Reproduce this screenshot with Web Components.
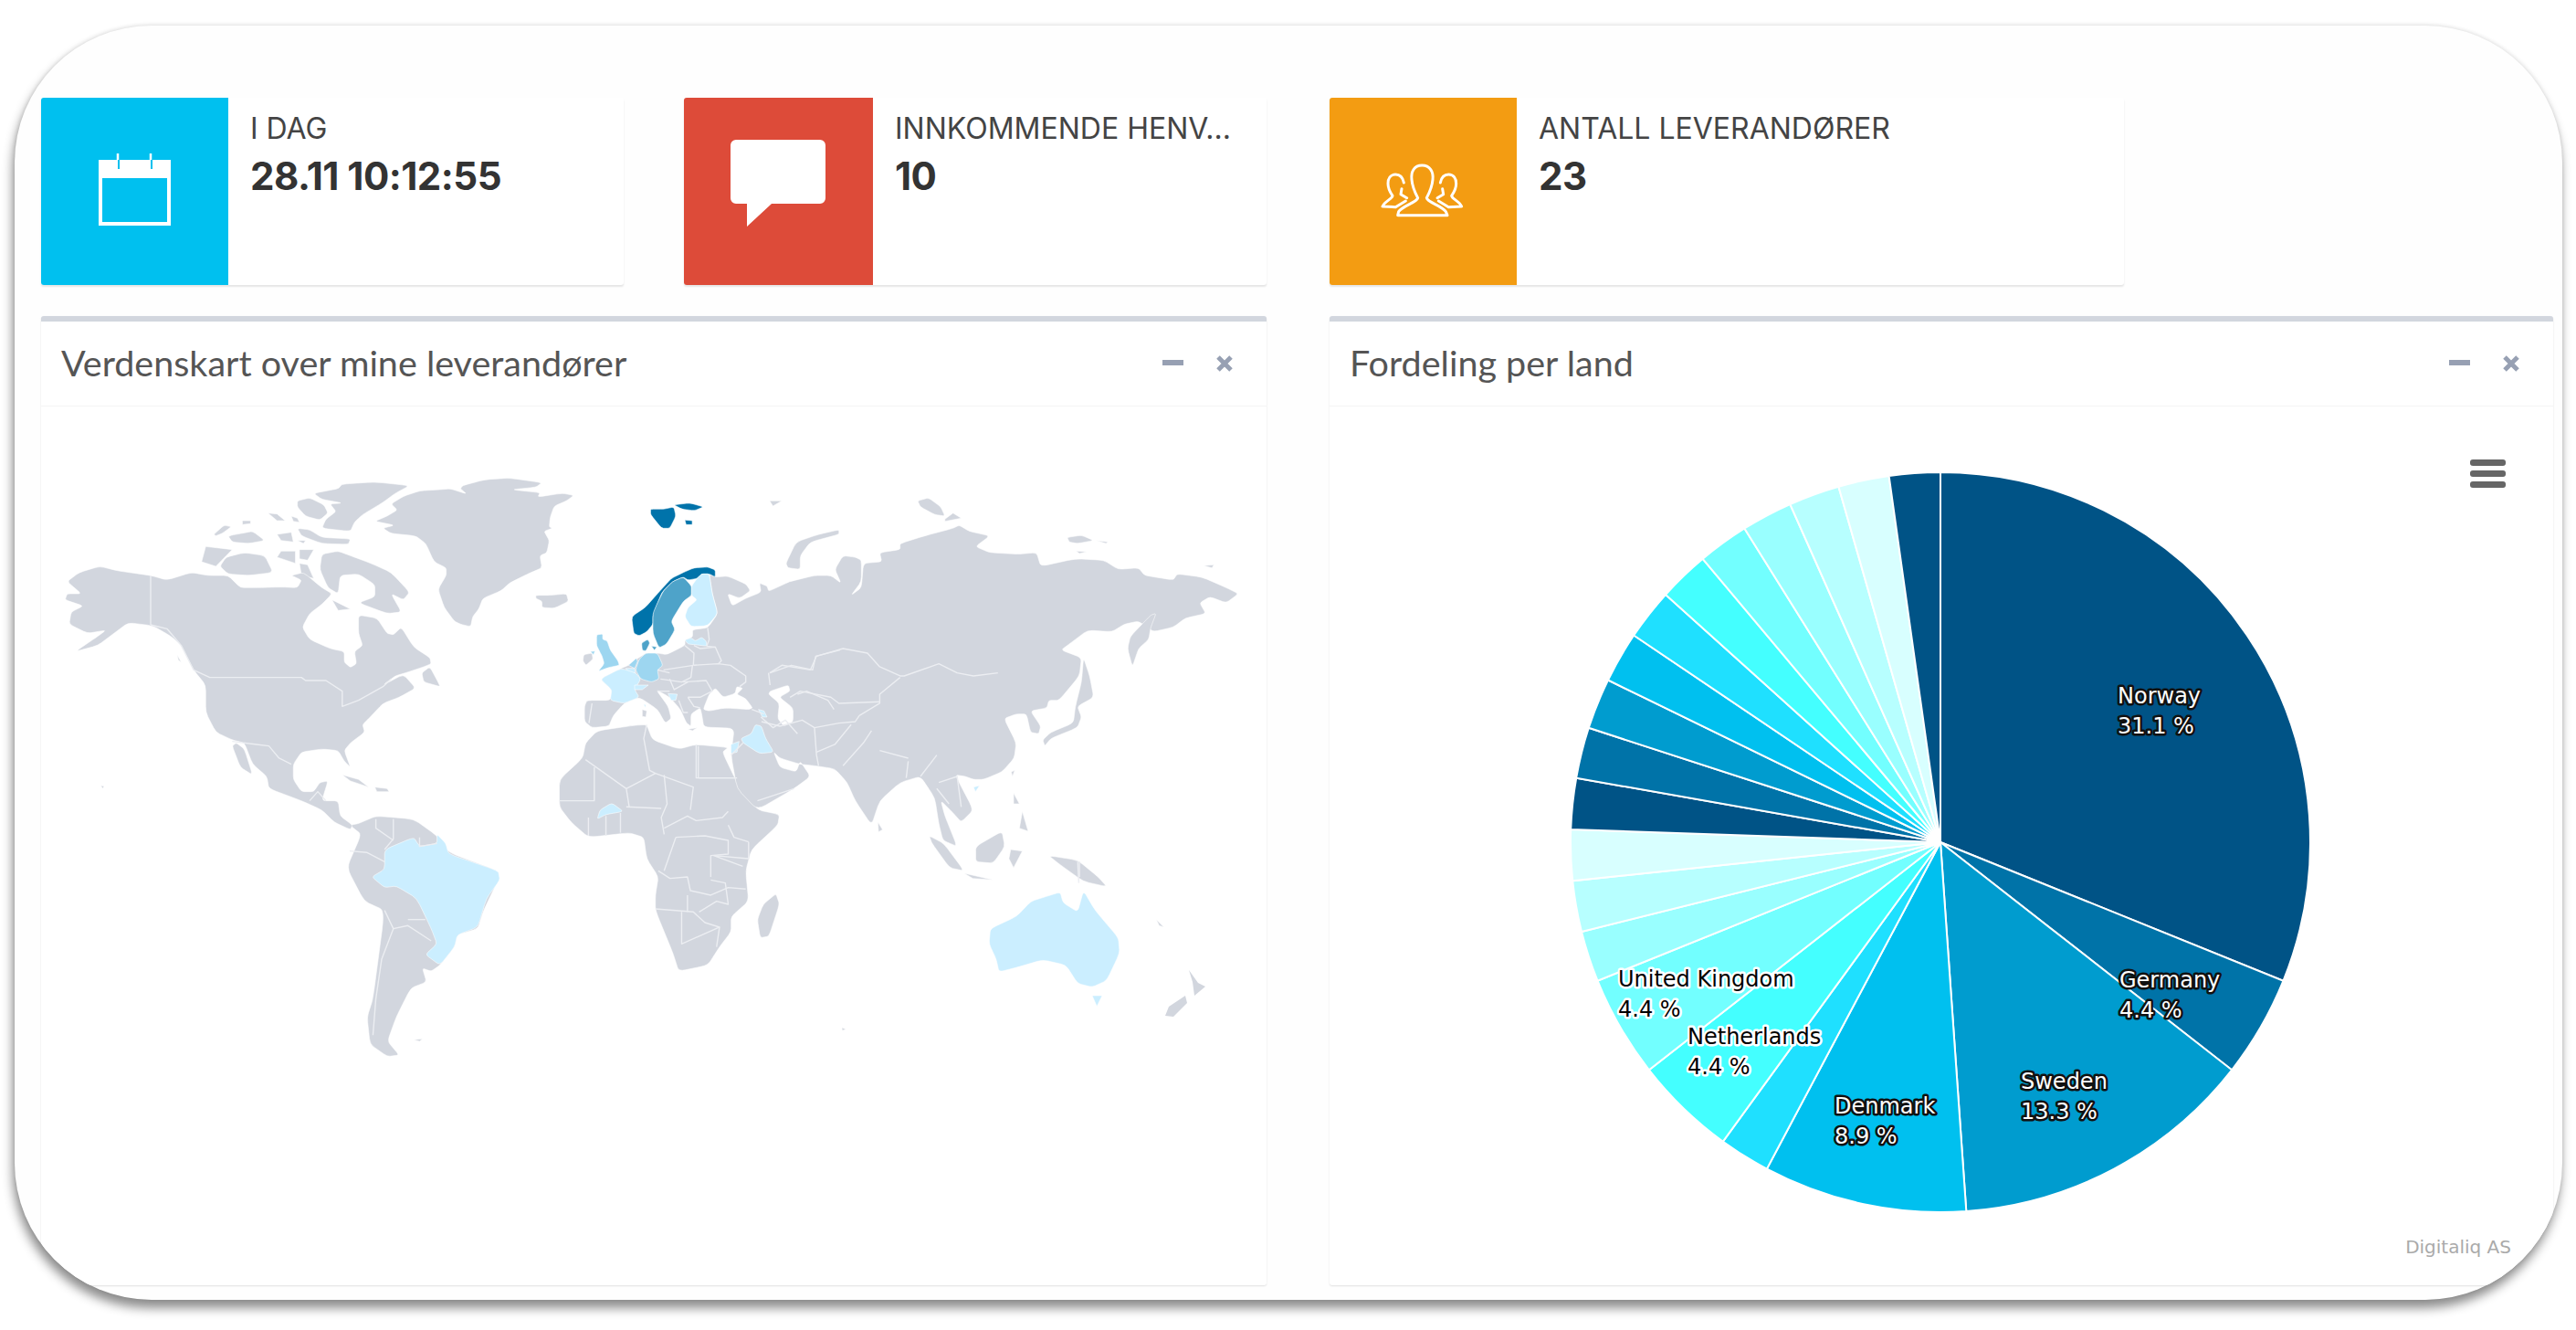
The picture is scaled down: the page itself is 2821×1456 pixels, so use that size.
<!DOCTYPE html>
<html lang="no">
<head>
<meta charset="utf-8">
<title>Dashboard</title>
<style>
  html, body { margin: 0; background: #fff; }
  body { font-family: "Inter", "Liberation Sans", sans-serif; }
</style>
</head>
<body>
<dash-frame>
  <div slot="left-cards">
    <info-box color="#00c0ef" label="I DAG" value="28.11 10:12:55">
      <svg slot="icon" width="205" height="205" viewBox="45 107 205 205">
        <path d="M108 175h79v72h-79z M112 195v48h71v-48z" fill="#fff" fill-rule="evenodd"/>
        <path d="M129 168v7M165 168v7" stroke="#fff" stroke-width="2.5"/>
        <path d="M130 175v10M166 175v10" stroke="#00c0ef" stroke-width="2"/>
      </svg>
    </info-box>
    <info-box color="#dd4b39" label="INNKOMMENDE HENV..." value="10">
      <svg slot="icon" width="207" height="205" viewBox="749 107 207 205">
        <path d="M806 153h92a6 6 0 0 1 6 6v58a6 6 0 0 1-6 6h-53l-27 25v-25h-12a6 6 0 0 1-6-6v-58a6 6 0 0 1 6-6z" fill="#fff"/>
      </svg>
    </info-box>
  </div>
  <info-box slot="right-card" color="#f39c12" label="ANTALL LEVERANDØRER" value="23">
    <svg slot="icon" width="205" height="205" viewBox="1456 107 205 205">
      <g transform="translate(1500 165) scale(.3333)" fill="none" stroke="#fff" stroke-width="9" stroke-linejoin="round" stroke-linecap="round">
        <path d="M172 48C145 48 135 70 138 95C140 120 150 140 158 155C155 170 110 180 95 200L92 212H255L250 200C235 180 190 170 187 155C195 140 205 120 207 95C210 70 198 48 172 48Z"/>
        <path d="M112 105C108 85 98 78 85 78C68 78 60 92 60 108C60 125 68 138 75 148C72 160 50 165 42 183L85 185L118 165M105 125L102 143L122 155"/>
        <path d="M232 105C236 85 246 78 259 78C276 78 284 92 284 108C284 125 276 138 269 148C272 160 294 165 302 183L259 185L226 165M239 125L242 143L222 155"/>
      </g>
    </svg>
  </info-box>
  <box-panel slot="left-panel" heading="Verdenskart over mine leverandører"><world-map></world-map></box-panel>
  <box-panel slot="right-panel" heading="Fordeling per land"><share-pie></share-pie></box-panel>
</dash-frame>

<script>
// outer rounded frame, holds the two columns
customElements.define('dash-frame', class extends HTMLElement {
  constructor () {
    super()
    this.attachShadow({ mode: 'open' }).innerHTML = `
      <style>
        :host {
          display: block;
          box-sizing: border-box;
          width: 2790px;
          height: 1395px;
          margin: 28px 15px 33px 16px;
          padding: 79px 10px 16px 29px;
          background: #fefefe;
          border-radius: 150px;
          overflow: hidden;
          box-shadow: -2px 9px 12px rgba(0, 0, 0, .45), 0 -1px 4px rgba(0, 0, 0, .1);
        }
        .grid {
          display: grid;
          grid-template-columns: 1342px 1340px;
          grid-template-rows: 205px 1061px;
          column-gap: 69px;
          row-gap: 34px;
        }
        ::slotted([slot="left-cards"]) {
          display: grid;
          grid-template-columns: 638px 638px;
          column-gap: 66px;
        }
        ::slotted([slot="right-card"]) { width: 870px; }
      </style>
      <div class="grid">
        <slot name="left-cards"></slot>
        <slot name="right-card"></slot>
        <slot name="left-panel"></slot>
        <slot name="right-panel"></slot>
      </div>`
  }
})

customElements.define('info-box', class extends HTMLElement {
  constructor () {
    super()
    this.attachShadow({ mode: 'open' }).innerHTML = `
      <style>
        :host {
          display: flex;
          height: 205px;
          background: #fff;
          border-radius: 3px;
          box-shadow: 0 2px 2px rgba(0, 0, 0, .1);
          color: #333;
          font-family: "Inter", "Liberation Sans", sans-serif;
        }
        .icon { display: flex; flex: none; border-radius: 3px 0 0 3px; }
        .text { padding: 14px 0 0 24px; min-width: 0; }
        .label { font-size: 32px; line-height: 40px; color: #444; white-space: nowrap; }
        .value { font-size: 42px; line-height: 50px; margin-top: 7px; font-weight: 700; letter-spacing: -.5px; white-space: nowrap; }
      </style>
      <div class="icon" style="background:${this.getAttribute('color')}"><slot name="icon"></slot></div>
      <div class="text">
        <div class="label">${this.getAttribute('label')}</div>
        <div class="value">${this.getAttribute('value')}</div>
      </div>`
  }
})

customElements.define('box-panel', class extends HTMLElement {
  constructor () {
    super()
    this.attachShadow({ mode: 'open' }).innerHTML = `
      <style>
        :host {
          display: flex;
          flex-direction: column;
          background: #fff;
          border-top: 6px solid #d2d6de;
          border-radius: 3px;
          box-shadow: 0 1px 2px rgba(0, 0, 0, .12);
          color: #444;
        }
        header {
          display: flex;
          align-items: center;
          flex: none;
          height: 92px;
          padding: 0 37px 0 22px;
          border-bottom: 1px solid #f4f4f4;
        }
        h3 { flex: 1; margin: 0 0 3px; font: 400 39.5px "Lato", "Open Sans", sans-serif; color: #555; }
        .tools { display: flex; align-items: center; gap: 36px; }
        .tools svg { display: block; }
        .body { flex: 1; min-height: 0; }
      </style>
      <header>
        <h3>${this.getAttribute('heading')}</h3>
        <div class="tools">
          <svg width="23" height="18" viewBox="0 0 23 18"><rect y="5" width="23" height="6" fill="#97a0b3"/></svg>
          <svg width="18" height="18" viewBox="0 0 18 18"><path d="M2 2l14 14M16 2L2 16" stroke="#97a0b3" stroke-width="5"/></svg>
        </div>
      </header>
      <div class="body"><slot></slot></div>`
  }
})

// country shapes, traced by hand. Each block has its own scale (see groups below)
const GREY = '#d2d6de'
const LIGHT = '#cbeeff'
const MID = '#9dd6f0'
const SWE = '#4ea3c9'
const NOR = '#0073aa'

// europe points are traced at 3x from (620,600), this maps them into the east block
const toEast = s => s.trim().split(/\s+/).map(p => {
  const [x, y] = p.split(',').map(Number)
  return `${(x * 0.7467 - 179).toFixed(1)},${y + 360}`
}).join(' ')

const westShapes = [
  [GREY, '1045,155 1100,135 1160,130 1240,145 1225,160 1165,168 1235,178 1230,192 1290,180 1318,187 1300,205 1270,222 1260,260 1258,290 1265,295 1245,305 1258,335 1252,375 1235,385 1240,425 1205,445 1160,475 1140,500 1095,525 1085,560 1070,585 1065,618 1040,610 1025,600 1000,555 985,495 1005,450 1005,425 975,405 955,345 930,320 870,312 850,295 878,285 830,272 860,255 885,235 870,215 900,190 940,172 990,168 1015,165 1055,182 1040,165'],
  [GREY, '1225,515 1260,515 1300,510 1305,535 1270,558 1240,555 1240,535 1225,525'],
  [GREY, '750,150 830,143 915,155 880,180 850,210 800,250 780,275 770,305 700,295 710,265 735,240 720,215 750,212 700,200 680,180 740,165'],
  [GREY, '640,205 670,195 705,218 715,245 695,268 660,255 640,225'],
  [GREY, '435,315 460,285 478,290 455,312 440,320'],
  [GREY, '470,320 510,310 530,305 560,335 520,345 480,340'],
  [GREY, '590,315 625,308 630,340 600,335'],
  [GREY, '505,270 525,270 525,280 505,283'],
  [GREY, '568,245 590,248 610,270 590,270'],
  [GREY, '625,255 640,262 645,275 630,272'],
  [GREY, '640,335 660,335 655,345'],
  [GREY, '640,295 670,300 700,325 770,330 765,348 700,345 650,320'],
  [GREY, '415,355 480,365 440,420 405,405'],
  [GREY, '465,390 510,375 560,385 580,440 520,450 470,445 450,420'],
  [GREY, '600,370 635,370 635,410 590,390'],
  [GREY, '645,365 680,365 665,400 645,395'],
  [GREY, '645,410 665,415 680,460 650,450'],
  // Alaska, Canada, USA, Mexico, Central America
  [GREY, '75,470 105,440 155,420 200,435 280,450 320,465 380,440 420,450 470,450 500,490 540,490 600,488 640,490 650,465 625,450 655,440 700,490 725,510 700,545 670,575 652,620 670,660 720,690 755,700 755,735 770,752 785,740 780,700 800,680 790,640 790,580 835,590 860,640 875,645 895,620 925,685 965,720 968,740 950,750 905,770 880,780 850,810 900,775 930,820 890,850 850,870 815,920 800,940 805,965 770,1000 755,1025 770,1080 755,1060 740,1025 700,1020 650,1030 630,1070 630,1120 650,1160 680,1160 695,1130 715,1125 700,1190 740,1190 745,1240 775,1270 770,1285 730,1260 700,1220 650,1190 570,1150 565,1110 530,1070 510,1000 480,990 440,965 415,900 415,810 385,760 355,680 330,650 285,615 225,605 190,640 150,680 95,700 150,650 170,630 125,640 80,610 85,570 115,550 70,530 75,510 110,510'],
  [GREY, '490,1000 510,1020 530,1105 500,1080 480,1010'],
  [GREY, '700,380 740,370 770,385 820,410 870,440 915,505 900,530 870,510 895,570 860,575 790,540 830,520 830,480 790,445 745,450 740,510 715,490 695,430'],
  [GREY, '725,530 770,560 740,565'],
  [GREY, '945,770 965,750 985,800 990,815 950,800'],
  [GREY, '345,710 355,735 348,728'],
  [GREY, '750,1105 790,1120 815,1145 770,1125'],
  [GREY, '830,1145 860,1150 865,1160 835,1160'],
  [GREY, '158,1140 166,1142 162,1150']
]

const eastShapes = [
  // Eurasia, with the Black Sea and the Caspian cut out
  [GREY, toEast('490,95 530,92 590,118 605,140 570,165 530,150 545,190 590,165 640,145 635,115 660,125 665,142 730,112') +
    ' 370,470 430,450 470,450 495,475 480,430 500,385 530,390 545,400 545,470 520,515 545,490 550,410 595,405 590,375 640,365 640,345 700,320 770,295 785,285 810,305 860,320 825,355 860,375 930,380 975,375 985,420 1070,395 1140,400 1175,430 1225,425 1240,450 1310,465 1320,445 1380,455 1440,490 1470,510 1440,540 1400,520 1375,540 1390,575 1340,590 1310,620 1260,635 1225,600 1190,610 1160,635 1100,630 1060,670 1035,695 1085,720 1080,780 1030,860 1005,860 1000,885 960,895 985,945 980,970 960,965 950,905 925,905 895,920 925,1000 920,1050 890,1095 845,1120 820,1120 800,1110 775,1105 820,1220 790,1260 770,1230 740,1190 750,1240 780,1340 745,1320 735,1265 725,1180 690,1110 640,1130 590,1190 570,1270 530,1190 510,1130 480,1085 430,1075 395,1070 345,1050 330,1030 345,1080 385,1095 395,1060 420,1110 380,1150 290,1220 240,1150 225,1040 ' +
    toEast('552,592 452,588 445,545 440,525 410,545 410,585 395,575 375,530 340,490 295,465 335,520 345,560 325,575 300,530 240,490 190,510 155,550 140,585 85,590 60,570 60,520 68,500 145,500 150,465 112,430 180,395 205,385 235,362 262,345 300,345 330,350 390,320 390,302 415,292 415,268 465,262 498,215 480,150 470,85'),
    toEast('470,480 490,460 515,490 555,478 560,455 580,460 560,480 590,495 612,525 600,530 520,525 470,535 450,530'),
    toEast('670,470 730,450 735,470 700,490 745,525 745,570 715,585 695,560 700,510 665,480')],
  [GREY, '683,205 710,195 740,225 750,255 725,250 690,225'],
  [GREY, '750,265 770,245 790,262 750,272'],
  [GREY, '1050,325 1085,318 1115,335 1075,345 1055,340'],
  [GREY, '1122,335 1150,340 1145,345'],
  [GREY, '1072,370 1098,372 1080,378'],
  [GREY, '1385,418 1410,415 1405,425'],
  [GREY, '320,205 350,205 328,222'],
  [GREY, '360,410 385,340 440,315 490,300 490,315 420,340 395,385 395,430 365,425'],
  [GREY, '1255,580 1268,575 1255,620 1250,660 1225,690 1210,750 1198,690 1205,650'],
  [GREY, '1090,720 1105,780 1115,850 1075,880 1085,915 1075,950 1010,985 995,1010 990,990 1010,965 1065,935 1070,880 1085,800'],
  [NOR, '28,232 60,232 85,225 90,255 75,295 55,295 28,250'],
  [NOR, '85,218 125,212 158,225 135,237 105,232'],
  [NOR, '112,268 130,270 130,283 115,283'],
  [LIGHT, '285,940 300,945 310,985 330,1030 295,1035 255,1000 250,985 275,970'],
  [LIGHT, '225,1005 245,995 240,1030 225,1035'],
  [LIGHT, '820,1145 835,1140 825,1160']
]

// traced at 3x from (620,600)
const europeShapes = [
  [GREY, '58,350 85,345 88,365 65,385 55,370'],
  [GREY, '250,530 265,535 262,555 250,553'],
  [GREY, '400,595 430,590 415,600'],
  [NOR, '215,225 260,195 300,150 345,100 385,80 420,65 465,62 490,72 490,95 470,85 445,85 430,100 400,105 385,95 350,110 315,145 295,195 285,225 285,250 265,275 240,288 222,280'],
  [SWE, '350,110 385,95 412,125 412,155 385,175 345,240 358,268 330,315 305,328 285,280 285,215 300,180 320,140'],
  [LIGHT, '412,125 430,100 445,85 470,85 480,150 498,215 465,255 410,258 390,225 400,195 430,170 412,155'],
  [LIGHT, '390,302 410,295 425,305 445,293 460,305 462,322 430,318 400,315'],
  [SWE, '248,312 268,300 275,312 262,338 250,335'],
  [SWE, '280,322 298,325 290,335'],
  [MID, '262,345 300,345 318,385 300,400 305,430 280,440 245,430 228,400 240,365'],
  [MID, '205,385 230,362 235,372 225,395'],
  [LIGHT, '195,395 225,395 228,410 210,410'],
  [LIGHT, '112,430 180,395 228,410 245,430 225,465 240,490 190,510 145,500 150,465'],
  [LIGHT, '225,450 270,450 250,465 225,465'],
  [MID, '100,285 120,282 120,300 135,305 145,335 170,370 175,385 140,392 105,405 125,380 118,355 110,340 100,320'],
  [MID, '80,340 95,338 90,350'],
  [LIGHT, '255,512 262,515 260,525'],
  [LIGHT, '335,478 365,480 360,500 345,500'],
  [LIGHT, '632,530 650,535 660,555 645,555']
]

const southShapes = [
  [GREY, '555,60 620,42 640,40 650,90 695,120 725,105 780,115 770,130 795,230 830,320 868,335 865,370 820,450 810,520 815,620 785,670 785,720 765,770 745,830 695,850 685,790 655,650 655,600 660,540 640,480 635,410 610,395 540,410 510,360 490,310 490,220 530,150 535,100'],
  [GREY, '862,595 868,630 850,735 835,740 830,680 840,630'],
  [GREY, '1037,360 1045,385 1038,392'],
  [GREY, '1125,405 1150,430 1185,520 1160,510 1130,430'],
  [GREY, '1185,528 1235,550 1200,545'],
  [GREY, '1250,390 1255,440 1235,495 1205,490 1205,440'],
  [GREY, '1265,450 1285,455 1270,510 1262,480'],
  [GREY, '1330,470 1380,485 1415,540 1430,572 1390,555 1350,500'],
  [GREY, '1272,190 1268,210 1266,195'],
  [GREY, '1270,265 1280,300 1270,300'],
  [GREY, '1285,325 1295,390 1280,380'],
  [GREY, '1515,680 1528,705 1520,700'],
  [GREY, '145,365 175,340 240,350 280,405 300,460 385,520 385,550 360,650 350,710 315,730 310,770 285,830 270,850 255,840 262,885 235,905 210,1000 195,1080 215,1125 195,1130 165,1090 160,1000 170,940 190,650 155,620 125,510 150,400 130,370'],
  [GREY, '240,1075 255,1072 250,1080'],
  [GREY, '975,1035 982,1040 976,1045'],
  [LIGHT, '190,450 240,410 250,440 280,430 280,400 295,430 300,465 385,520 388,550 365,610 350,705 315,730 310,770 285,830 260,795 280,760 270,710 245,610 210,570 190,575 168,540 190,515'],
  [LIGHT, '580,297 600,325 570,335 555,350 560,320'],
  [LIGHT, '1230,710 1275,670 1300,620 1325,605 1350,590 1355,625 1380,655 1390,585 1410,650 1450,740 1452,790 1430,880 1405,902 1380,890 1360,830 1320,812 1280,835 1245,852 1240,810 1228,760'],
  [LIGHT, '1405,930 1422,930 1413,965']
]

// thin lighter lines between countries of the same colour
const westBorders = [
  '280,450 280,612',
  '280,612 320,625 355,680 385,760 425,785 650,785 660,795 710,795 750,830 750,880 790,860 850,815 870,790',
  '480,995 540,1005 570,1010 595,1050 625,1070',
  '670,1190 690,1160 710,1190'
]
const eastBorders = [
  '320,770 350,745 420,760 435,715 500,690 560,705 590,750 640,780 650,780 735,740 780,770 820,780 880,770',
  '640,785 590,840 590,870 540,910',
  '370,850 395,830 470,850 490,870 590,865',
  '300,930 345,945 400,925 430,950 435,1040 440,1075',
  '430,950 490,935 530,930 540,910',
  '435,1030 480,1005 520,940',
  '500,1075 550,1000 570,960',
  '590,1025 660,1050',
  '660,1060 655,1115',
  '690,1110 730,1040',
  '735,1130 780,1110 790,1210',
  '730,1150 760,1200',
  '240,1115 145,1115',
  '145,1010 145,1115',
  '290,1190 380,1150',
  '255,1000 225,1040',
  '1080,1390 1080,1440'
]
const europeBorders = [
  '420,320 440,330 490,325 510,370 500,380',
  '418,385 420,345 390,320',
  '320,400 418,385',
  '418,385 500,380 540,385 590,420 590,440 570,455',
  '415,385 410,425 380,440 310,430',
  '300,400 340,410',
  '340,430 355,465 400,440',
  '385,440 460,435 480,470 440,490 400,490',
  '370,500 385,540 400,540',
  '400,490 420,520 440,525',
  '300,470 340,470',
  '85,510 75,575',
  '610,530 650,545',
  '670,410 740,385 810,400 820,355 900,335',
  '665,410 670,450',
  '760,480 790,470 860,500 880,530',
  '640,555 680,590 720,565 760,610',
  '465,262 470,300 462,322 490,325'
]
const southBorders = [
  '535,155 605,250',
  '640,40 635,85 645,190 655,200 605,250 610,310',
  '655,200 720,245 715,320',
  '725,105 725,215 795,215',
  '670,205 675,300 665,345 670,400',
  '490,290 550,290 550,180',
  '605,310 665,315',
  '670,380 710,340 725,355 770,345 780,325',
  '780,370 790,410 815,425',
  '690,410 740,405 780,420 780,465 750,470 750,540',
  '690,410 670,520',
  '660,520 680,545 710,540 715,585 750,600 780,575 810,580',
  '655,645 720,655 740,690 765,705 700,760 700,655',
  '815,425 815,480 755,470 805,505',
  '750,550 775,560 780,630 760,620 730,655',
  '710,600 710,655',
  '765,705 760,770',
  '540,345 540,405',
  '570,340 570,405',
  '595,330 595,395',
  '190,450 205,415 205,350',
  '175,350 175,380 205,420',
  '130,455 160,460 190,490',
  '190,650 205,710 230,700 270,750',
  '205,710 185,810 175,940 170,1060',
  '230,680 260,680',
  '1380,490 1382,560',
  '250,410 250,440 280,430'
]

// takes the hard corners off a traced ring, the outline itself stays where it is
const ringPath = ring => {
  const pts = ring.trim().split(/\s+/).map(p => p.split(',').map(Number))
  if (pts.length < 5) return 'M' + ring + 'Z'
  const along = (a, b, t) => `${(a[0] + (b[0] - a[0]) * t).toFixed(1)} ${(a[1] + (b[1] - a[1]) * t).toFixed(1)}`
  let d = ''
  pts.forEach((p, i) => {
    const prev = pts[(i + pts.length - 1) % pts.length]
    const next = pts[(i + 1) % pts.length]
    d += (i ? 'L' : 'M') + along(p, prev, 0.22) + `Q${p[0]} ${p[1]} ` + along(p, next, 0.22)
  })
  return d + 'Z'
}

customElements.define('world-map', class extends HTMLElement {
  constructor () {
    super()
    const shapes = list => list.map(([fill, ...rings]) => {
      const d = rings.map(ringPath).join('')
      return `<path d="${d}" fill="${fill}" fill-rule="evenodd" stroke="#fff" stroke-opacity=".55" stroke-width="1" vector-effect="non-scaling-stroke"/>`
    }).join('')
    const lines = list => list.map(p => `<polyline points="${p}" fill="none" stroke="#eceef2" stroke-width="1.4" stroke-linejoin="round" vector-effect="non-scaling-stroke"/>`).join('')
    this.attachShadow({ mode: 'open' }).innerHTML = `
      <style>
        :host { display: block; height: 100%; }
        svg { display: block; width: 100%; height: 100%; }
      </style>
      <svg viewBox="45 445 1342 962">
        <g transform="translate(300 780) scale(.6378 .3333)">${shapes(southShapes)}${lines(southBorders)}</g>
        <g transform="translate(40 480) scale(.4464 .3333)">${shapes(westShapes)}${lines(westBorders)}</g>
        <g transform="translate(700 480) scale(.4464 .3333)">${shapes(eastShapes)}${lines(eastBorders)}</g>
        <g transform="translate(620 600) scale(.3333)">${shapes(europeShapes)}${lines(europeBorders)}</g>
        <g fill="${GREY}">
          <polygon points="1298,1090 1300,1098 1285,1113 1276,1112 1280,1102"/>
          <polygon points="1302,1062 1312,1076 1320,1080 1308,1090 1306,1075"/>
        </g>
      </svg>`
  }
})

const RAMP = ['#005386', '#0073a8', '#009ccf', '#00c0ef', '#1fe0ff', '#44ffff', '#72ffff', '#99ffff', '#b7ffff', '#d8ffff']
const SLICES = [14, 2, 6, 4, 1, 2, 2, 1, 1, 1, 1, 1, 1, 1, 1, 1, 1, 1, 1, 1, 1]
const LABELS = [
  { x: 2319, y: 770, fill: '#fff', halo: '#111', a: 'Norway', b: '31.1 %' },
  { x: 2321, y: 1081, fill: '#fff', halo: '#111', a: 'Germany', b: '4.4 %' },
  { x: 2213, y: 1192, fill: '#fff', halo: '#111', a: 'Sweden', b: '13.3 %' },
  { x: 2009, y: 1219, fill: '#fff', halo: '#111', a: 'Denmark', b: '8.9 %' },
  { x: 1848, y: 1143, fill: '#000', halo: '#fff', a: 'Netherlands', b: '4.4 %' },
  { x: 1772, y: 1080, fill: '#000', halo: '#fff', a: 'United Kingdom', b: '4.4 %' }
]

customElements.define('share-pie', class extends HTMLElement {
  constructor () {
    super()
    const cx = 2125
    const cy = 922
    const r = 405
    const total = SLICES.reduce((a, b) => a + b, 0)
    let sum = 0
    const wedges = SLICES.map((v, i) => {
      const a0 = sum / total * Math.PI * 2
      sum += v
      const a1 = sum / total * Math.PI * 2
      const p = a => `${(cx + r * Math.sin(a)).toFixed(1)} ${(cy - r * Math.cos(a)).toFixed(1)}`
      const large = a1 - a0 > Math.PI ? 1 : 0
      return `<path d="M${cx} ${cy}L${p(a0)}A${r} ${r} 0 ${large} 1 ${p(a1)}Z" fill="${RAMP[i % RAMP.length]}" stroke="#fff" stroke-width="2"/>`
    }).join('')
    const labels = LABELS.map(l => `
      <text x="${l.x}" y="${l.y}" fill="${l.fill}" stroke="${l.halo}" style="paint-order:stroke" stroke-width="5" stroke-linejoin="round">${l.a}<tspan x="${l.x}" dy="33">${l.b}</tspan></text>`).join('')
    this.attachShadow({ mode: 'open' }).innerHTML = `
      <style>
        :host { display: block; height: 100%; }
        svg { display: block; width: 100%; height: 100%; }
        text { font: 24px "DejaVu Sans", "Liberation Sans", sans-serif; }
        .credit { font-size: 20px; fill: #aaa; stroke: none; }
      </style>
      <svg viewBox="1456 445 1340 962">
        ${wedges}
        ${labels}
        <g fill="#666">
          <rect x="2705" y="503" width="39" height="7" rx="3"/>
          <rect x="2705" y="515" width="39" height="7" rx="3"/>
          <rect x="2705" y="527" width="39" height="7" rx="3"/>
        </g>
        <text class="credit" x="2750" y="1372" text-anchor="end">Digitaliq AS</text>
      </svg>`
  }
})
</script>
</body>
</html>
